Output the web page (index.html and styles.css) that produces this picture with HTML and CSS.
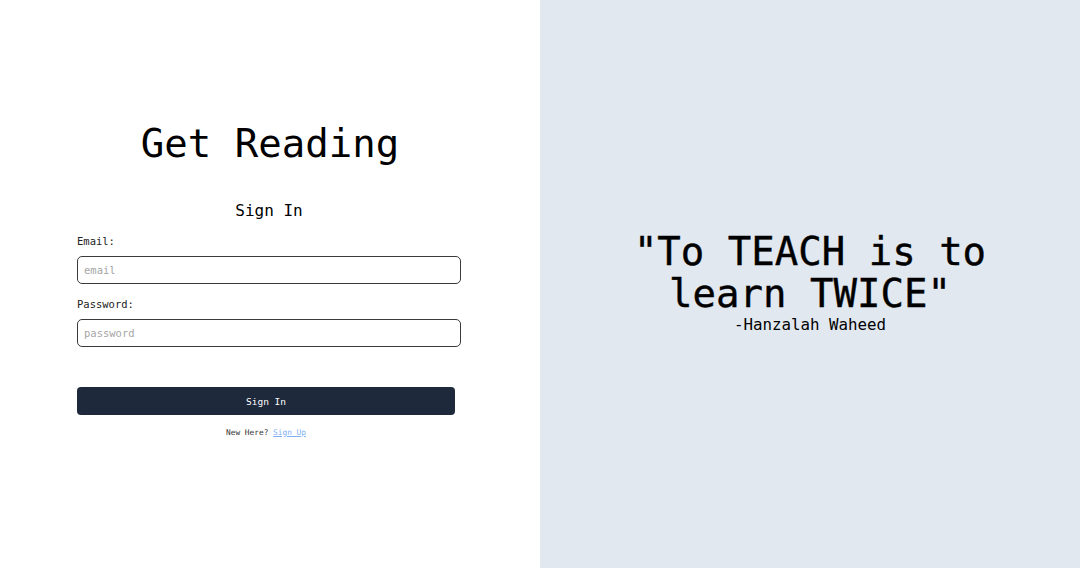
FILE: index.html
```html
<!DOCTYPE html>
<html lang="en">
<head>
<meta charset="utf-8">
<title>Get Reading</title>
<link rel="stylesheet" href="styles.css">
</head>
<body>
<main class="page">
  <section class="left">
    <h1 class="title">Get Reading</h1>
    <form class="form">
      <h2 class="subtitle">Sign In</h2>
      <label class="label" for="email">Email:</label>
      <input class="input" id="email" type="email" placeholder="email">
      <label class="label" for="password">Password:</label>
      <input class="input" id="password" type="password" placeholder="password">
      <button class="button" type="button">Sign In</button>
      <p class="note">New Here? <a class="link" href="#">Sign Up</a></p>
    </form>
  </section>
  <section class="right">
    <p class="quote">"To TEACH is to<br>learn TWICE"</p>
    <p class="author">-Hanzalah Waheed</p>
  </section>
</main>
</body>
</html>
```

FILE: styles.css
```css
* { box-sizing: border-box; }
html, body { margin: 0; padding: 0; height: 100%; }
body {
  font-family: "DejaVu Sans Mono", "Liberation Mono", monospace;
  color: #000;
}
.page {
  display: flex;
  height: 568px;
}
.left {
  width: 540px;
  background: #ffffff;
  display: flex;
  flex-direction: column;
  align-items: center;
  padding-top: 119px;
}
.title {
  margin: 0;
  font-size: 39px;
  line-height: 50px;
  font-weight: normal;
  letter-spacing: 0;
}
.form {
  width: 384px;
  margin-top: 30px;
  margin-left: -2px;
  display: flex;
  flex-direction: column;
}
.subtitle {
  margin: 0;
  text-align: center;
  font-size: 16px;
  line-height: 24px;
  font-weight: normal;
}
.label {
  font-size: 10.5px;
  line-height: 14px;
  color: #222;
  margin-top: 11px;
  margin-bottom: 8px;
}
.input {
  height: 28px;
  border: 1px solid #3a3a3a;
  border-radius: 5px;
  padding: 0 6px;
  font-family: inherit;
  font-size: 10.5px;
  color: #222;
  background: #fff;
  outline: none;
}
.input::placeholder { color: #a6a6a6; }
.input + .label { margin-top: 13px; }
.button {
  margin-top: 40px;
  width: 378px;
  height: 28px;
  border: none;
  border-radius: 4px;
  background: #1e293b;
  color: #fff;
  font-family: inherit;
  font-size: 9.5px;
  cursor: pointer;
}
.note {
  margin: 13px 0 0;
  width: 378px;
  text-align: center;
  font-size: 7.8px;
  line-height: 10px;
  color: #333;
}
.link {
  color: #7fb0f5;
  text-decoration: underline;
}
.right {
  flex: 1;
  background: #e2e8f0;
  display: flex;
  flex-direction: column;
  align-items: center;
  justify-content: center;
  padding-bottom: 2px;
}
.quote {
  margin: 0;
  text-align: center;
  font-size: 39px;
  line-height: 42px;
  -webkit-text-stroke: 0.4px #000;
}
.author {
  margin: 0;
  font-size: 15.8px;
  line-height: 20px;
}
```
